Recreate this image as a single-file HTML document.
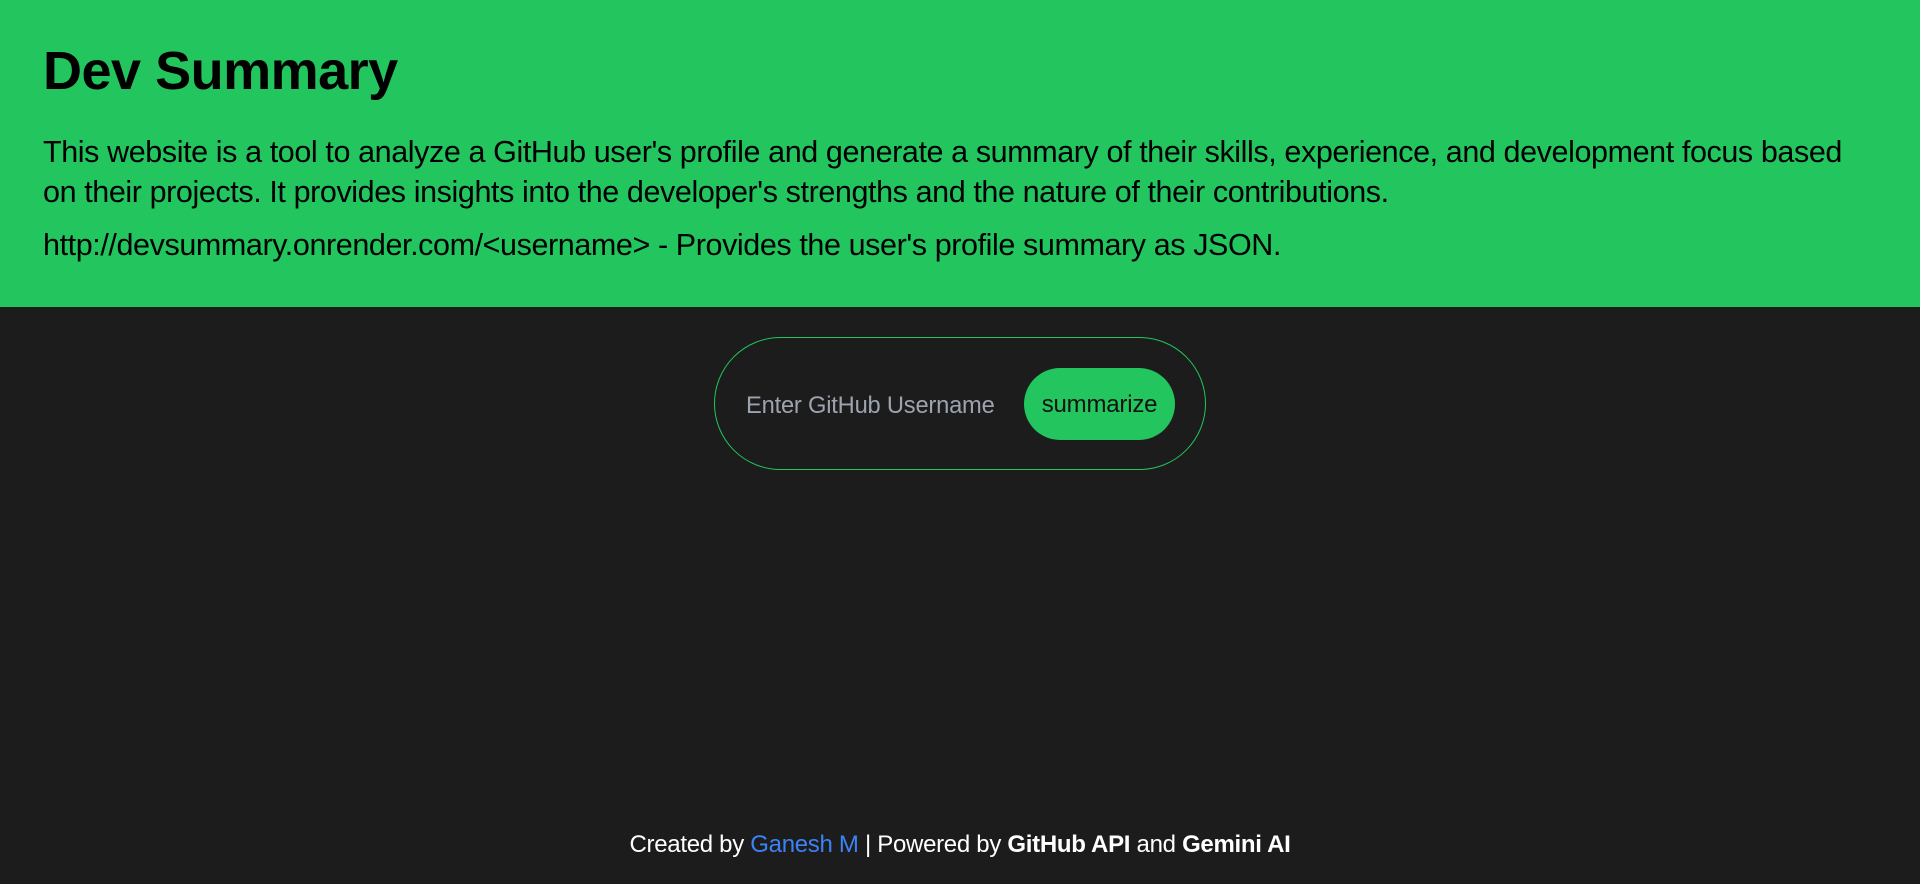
<!DOCTYPE html>
<html><head><meta charset="utf-8"><style>
*{margin:0;padding:0;box-sizing:border-box}
body{width:1920px;height:884px;background:#1c1c1c;font-family:"Liberation Sans",sans-serif;position:relative;overflow:hidden}
header{background:#22c55e;height:307px;color:#000}
h1{position:absolute;top:40px;left:43px;font-size:54px;font-weight:bold;letter-spacing:-0.5px}
.p{position:absolute;left:43px;font-size:30.5px;white-space:nowrap;letter-spacing:-0.4px}
.box{position:absolute;left:714px;top:337px;width:492px;height:133px;border:1px solid #22c55e;border-radius:67px}
.ph{position:absolute;left:746px;top:393px;font-size:23.7px;color:#9ca3af;letter-spacing:-0.2px}
.btn{position:absolute;left:1024px;top:368px;width:151px;height:72px;border-radius:36px;background:#22c55e;color:#111;font-size:24px;text-align:center;line-height:74px;letter-spacing:-0.2px}
footer{position:absolute;top:831px;left:0;width:1920px;text-align:center;color:#fff;font-size:24px;letter-spacing:-0.3px}
footer a{color:#3b82f6;text-decoration:none}
</style></head><body>
<header></header>
<h1>Dev Summary</h1>
<div class="p" style="top:135px">This website is a tool to analyze a GitHub user's profile and generate a summary of their skills, experience, and development focus based</div>
<div class="p" style="top:175px">on their projects. It provides insights into the developer's strengths and the nature of their contributions.</div>
<div class="p" style="top:228px">http://devsummary.onrender.com/&lt;username&gt; - Provides the user's profile summary as JSON.</div>
<div class="box"></div>
<div class="ph">Enter GitHub Username</div>
<div class="btn">summarize</div>
<footer>Created by <a>Ganesh M</a> | Powered by <b>GitHub API</b> and <b>Gemini AI</b></footer>
</body></html>
